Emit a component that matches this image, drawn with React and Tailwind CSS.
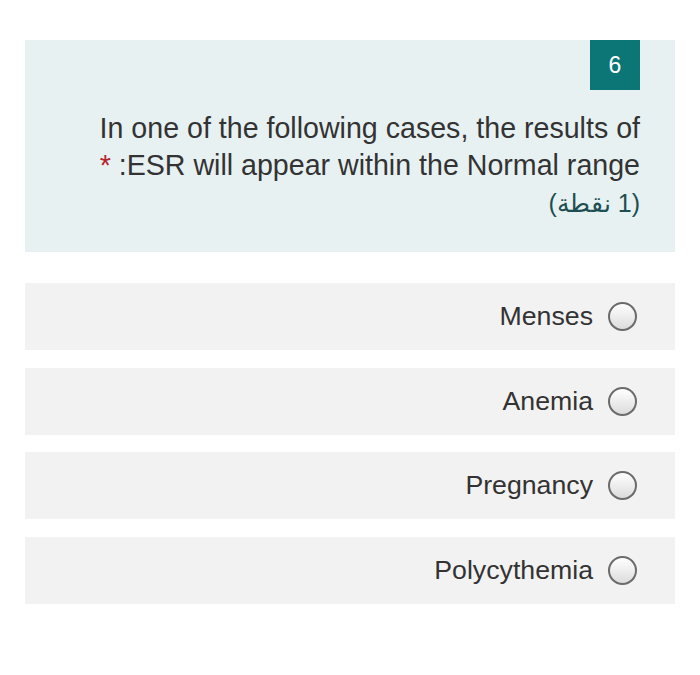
import React from 'react';

const options = ['Menses', 'Anemia', 'Pregnancy', 'Polycythemia'];

function Radio() {
  return (
    <span className="w-[29px] h-[29px] rounded-full border-2 border-[#6b6b6b] bg-gradient-to-b from-white to-[#dcdcdc] shrink-0" />
  );
}

export default function App() {
  return (
    <div className="w-[700px] h-[675px] bg-white pt-10 px-[25px] font-['Liberation_Sans',Arial,sans-serif]">
      {/* Question header */}
      <div className="h-[212px] bg-[#e8f1f2] pr-[35px] flex flex-col items-end">
        <div className="w-[50px] h-[50px] bg-[#0b7675] text-white text-[23px] flex items-center justify-center">
          6
        </div>
        <div className="mt-[20px] text-right text-[#333333] text-[28.6px] leading-[37px]">
          <div>In one of the following cases, the results of</div>
          <div>
            <span className="text-[#b3262b]">*</span> :ESR will appear within the Normal range
          </div>
          <div dir="rtl" className="text-[#1d4f52] text-[25px] leading-[38px]">
            (1 نقطة)
          </div>
        </div>
      </div>

      {/* Options */}
      <div className="mt-[31px] flex flex-col gap-[17.5px]">
        {options.map((opt) => (
          <div
            key={opt}
            className="h-[67px] bg-[#f2f2f2] pr-[38px] flex items-center justify-end gap-[15px]"
          >
            <span className="text-[26.7px] text-[#333333]">{opt}</span>
            <Radio />
          </div>
        ))}
      </div>
    </div>
  );
}
